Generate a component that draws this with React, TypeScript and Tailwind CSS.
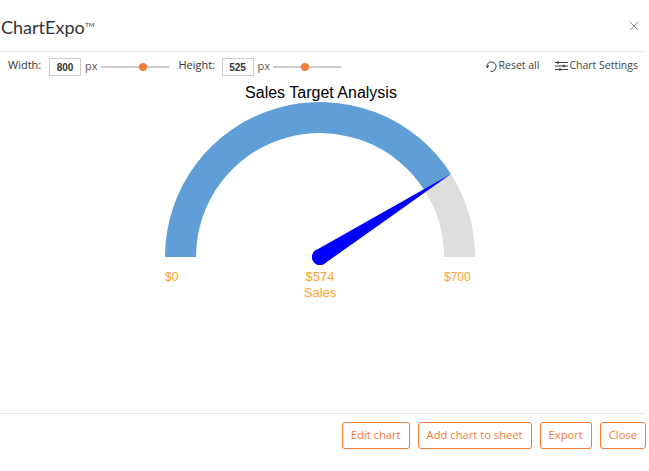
import { X } from 'lucide-react'

function SizeSlider({ label, value, labelClass, knobClass }: { label: string; value: number; labelClass: string; knobClass: string }) {
  return (
    <div className="flex items-center">
      <span className={`text-[11px] text-[#333] mb-[2px] ${labelClass}`}>{label}</span>
      <span className="w-[32px] h-[18px] border border-[#ccc] flex items-center justify-center text-[10px] font-semibold text-[#333] font-['Liberation_Sans',sans-serif] mt-[2px] pt-[1px]">
        {value}
      </span>
      <span className="ml-[4px] text-[11px] text-[#555]">px</span>
      <div className="relative ml-[3px] w-[68px] h-[2px] bg-[#ccc] mt-[2px]">
        <span className={`absolute top-[-3px] w-[8px] h-[8px] rounded-full bg-[#f47b36] ${knobClass}`} />
      </div>
    </div>
  )
}

function Gauge() {
  return (
    <svg width="646" height="230" viewBox="0 80 646 230" className="block font-['Liberation_Sans',sans-serif]">
      <text x="321" y="98" textAnchor="middle" fontSize="16" fill="#000">Sales Target Analysis</text>
      <path d="M450.9 174 A155 155 0 0 1 475 257 L444 257 A124 124 0 0 0 424.7 190.6 Z" fill="#dedede" />
      <path d="M165 257 A155 155 0 0 1 450.9 174 L424.7 190.6 A124 124 0 0 0 196 257 Z" fill="#5f9ed6" />
      <path d="M450.9 174 L324.6 263.6 A8 8 0 0 1 315.4 250.4 Z" fill="#0000ff" />
      <circle cx="320" cy="257" r="8" fill="#0000ff" />
      <g fontSize="12" fill="#ff9f2d">
        <text x="165" y="281">$0</text>
        <text x="320" y="281" textAnchor="middle" fontSize="13">$574</text>
        <text x="320" y="297" textAnchor="middle" fontSize="13">Sales</text>
        <text x="444" y="281">$700</text>
      </g>
    </svg>
  )
}

function ResetIcon() {
  return (
    <svg width="13" height="13" viewBox="0 0 13 13" fill="none" stroke="#333" strokeWidth="1" className="block">
      <path d="M2.2 4.8 A4.6 4.6 0 1 1 5.4 11.2" />
      <path d="M0.6 5.6 L4.4 5.6 L2.5 8.2 Z" fill="#333" stroke="none" />
    </svg>
  )
}

function SettingsIcon() {
  return (
    <svg width="13" height="12" viewBox="0 0 13 12" fill="none" stroke="#444" strokeWidth="1" className="block">
      <path d="M0 2.5 H13 M0 6 H13 M0 9.5 H13" />
      <circle cx="3" cy="2.5" r="1.3" fill="#444" stroke="none" />
      <circle cx="9" cy="6" r="1.3" fill="#444" stroke="none" />
      <circle cx="5" cy="9.5" r="1.3" fill="#444" stroke="none" />
    </svg>
  )
}

const buttons = ['Edit chart', 'Add chart to sheet', 'Export', 'Close']

export default function App() {
  return (
    <div className="w-[649px] h-[471px] bg-white overflow-hidden font-['Open_Sans',sans-serif]">
      <div className="w-[646px]">
        <header className="h-[52px] border-b border-[#e5e5e5] flex items-center justify-between">
          <h1 className="ml-[1px] text-[18px] leading-none text-[#333] font-['Lato',sans-serif] mt-[2px]">
            ChartExpo<sup className="text-[6px] top-[-7px] ml-[0.5px]">TM</sup>
          </h1>
          <X className="mr-[4px] text-[#666]" size={16} strokeWidth={1.1} />
        </header>

        <div className="h-[28px] flex items-center justify-between">
          <div className="flex items-center gap-[10px] pl-[8px]">
            <SizeSlider label="Width:" value={800} labelClass="w-[41px]" knobClass="left-[38px]" />
            <SizeSlider label="Height:" value={525} labelClass="w-[43px]" knobClass="left-[28px]" />
          </div>
          <div className="flex items-center text-[10.5px] text-[#444] pr-[8px]">
            <ResetIcon />
            <span className="ml-[1px]">Reset all</span>
            <span className="ml-[16px]"><SettingsIcon /></span>
            <span className="ml-[1px]">Chart Settings</span>
          </div>
        </div>

        <Gauge />

        <footer className="mt-[103px] h-[58px] border-t border-[#e5e5e5] flex items-start justify-end gap-[8px] pt-[8px]">
          {buttons.map((b) => (
            <button
              key={b}
              className="h-[27px] px-[8px] border border-[#f47b36] rounded-[3px] text-[11.2px] text-[#f47b36] bg-white"
            >
              {b}
            </button>
          ))}
        </footer>
      </div>
    </div>
  )
}
